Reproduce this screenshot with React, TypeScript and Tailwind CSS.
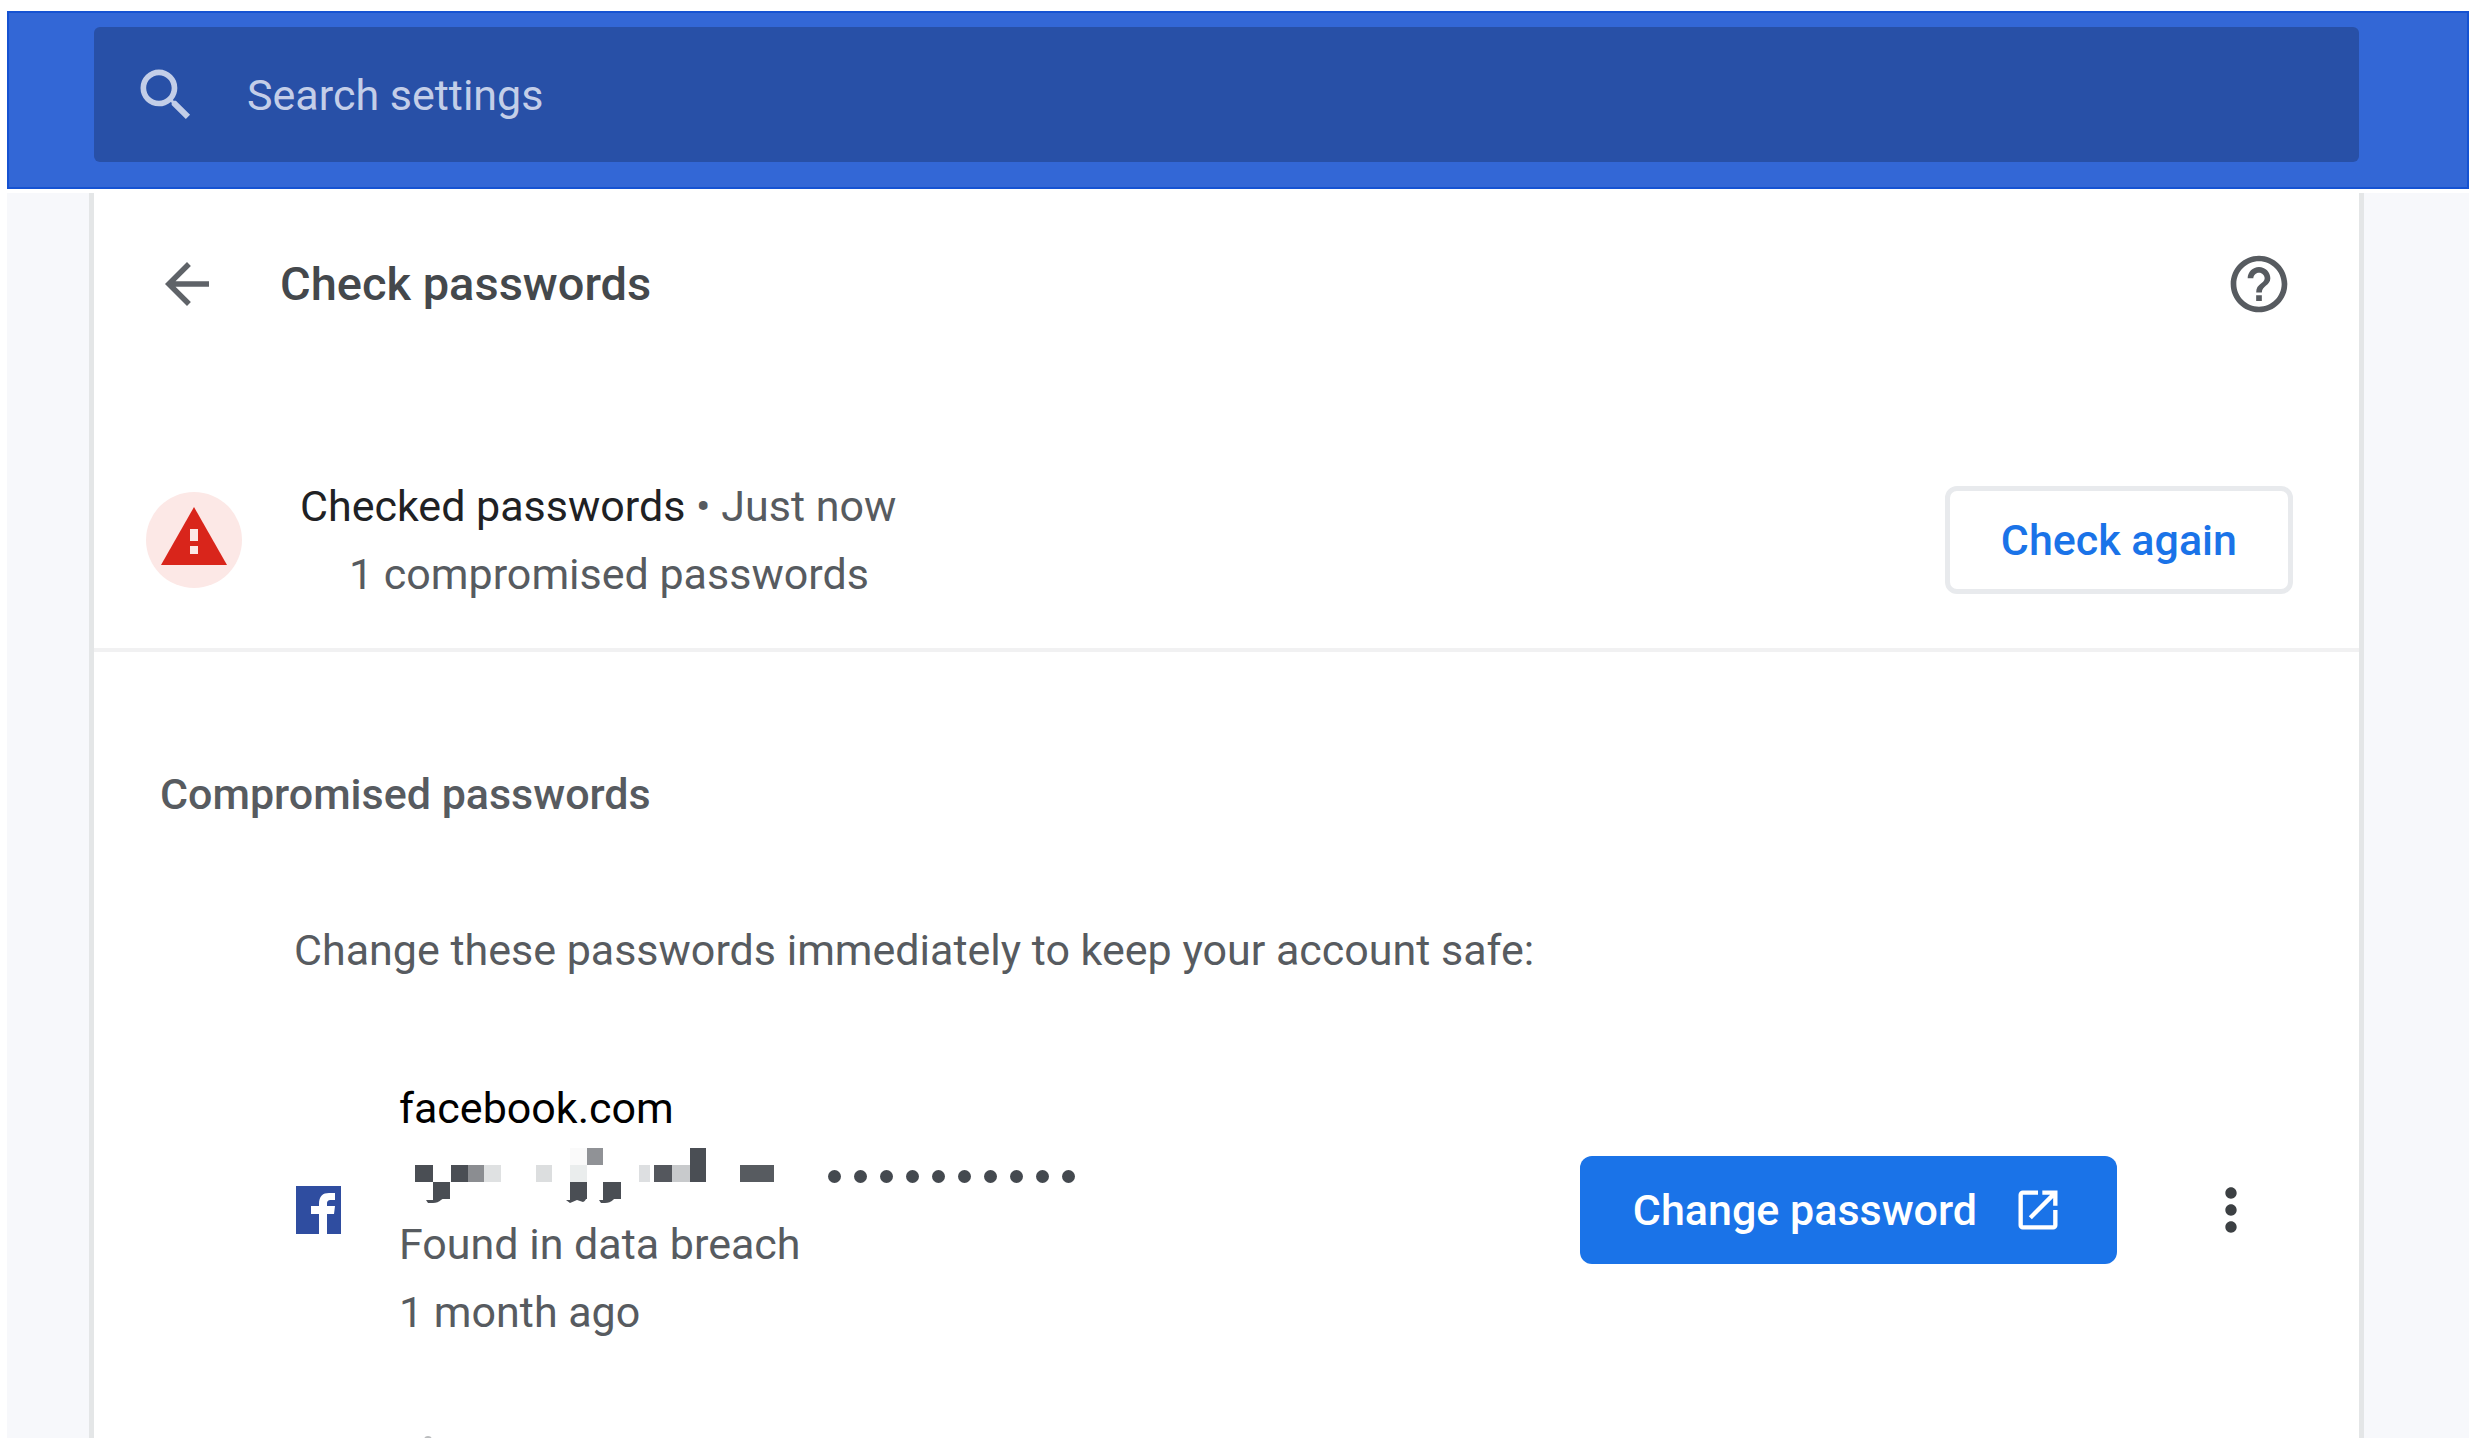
import { useState } from "react";
import { MdArrowBack, MdHelpOutline, MdMoreVert, MdOpenInNew, MdSearch } from "react-icons/md";

interface Cell {
  x: number;
  y: number;
  w: number;
  fill: string;
}

interface Account {
  site: string;
  dots: number;
  reason: string;
  age: string;
}

const accounts: Account[] = [
  { site: "facebook.com", dots: 10, reason: "Found in data breach", age: "1 month ago" },
];

// censored user name, drawn on a grid of 17px cells
const cells: Cell[] = [
  { x: 155, y: 0, w: 17, fill: "#fafafa" },
  { x: 172, y: 0, w: 16, fill: "#909296" },
  { x: 275, y: 0, w: 16, fill: "#4a4e54" },
  { x: 0, y: 17, w: 18, fill: "#4a4e54" },
  { x: 36, y: 17, w: 17, fill: "#4a4e54" },
  { x: 53, y: 17, w: 16, fill: "#8b8d91" },
  { x: 69, y: 17, w: 17, fill: "#dfe1e2" },
  { x: 121, y: 17, w: 16, fill: "#dcdedf" },
  { x: 155, y: 17, w: 17, fill: "#eaeded" },
  { x: 224, y: 17, w: 11, fill: "#dddfe1" },
  { x: 239, y: 17, w: 18, fill: "#54575d" },
  { x: 257, y: 17, w: 18, fill: "#c8cacc" },
  { x: 275, y: 17, w: 16, fill: "#4a4e54" },
  { x: 325, y: 17, w: 34, fill: "#575b60" },
  { x: 18, y: 34, w: 17, fill: "#4a4e54" },
  { x: 155, y: 34, w: 17, fill: "#4a4e54" },
  { x: 188, y: 34, w: 18, fill: "#4a4e54" },
];

function MaskedUsername() {
  return (
    <svg width="360" height="56" viewBox="0 0 360 56" role="img" aria-label="Hidden username">
      {cells.map((c) => (
        <rect key={`${c.x}-${c.y}`} x={c.x} y={c.y} width={c.w} height="17" fill={c.fill} />
      ))}
      <g fill="#4a4e54">
        <path d="M18 48h14l-6 4q-3 3-8 3h-5l-2-3h7z" />
        <path d="M155 48h17q-1 5-4 6l-6-2-7 3-4-3h4z" />
        <path d="M188 48h14l-4 4q-3 3-8 3h-4l-2-3h4z" />
      </g>
    </svg>
  );
}

function WarningIcon() {
  return (
    <svg width="66" height="58" viewBox="0 0 66 58" aria-hidden="true">
      <path d="M33 0 66 58H0z" fill="#d9251b" />
      <path d="M29 22h8v12h-8zM29 39h8v8h-8z" fill="#fce8e6" />
    </svg>
  );
}

function FacebookIcon() {
  return (
    <svg width="45" height="48" viewBox="0 0 45 48" aria-hidden="true" className="shrink-0">
      <rect width="45" height="48" fill="#2f4da0" />
      <path
        fill="#fff"
        d="M23 48V28h-8v-8h8v-2c0-8 4-11 10-11h6v7h-4c-3 0-4 1-4 4v2h8l-1 8h-7v20z"
      />
    </svg>
  );
}

function AccountRow({ account }: { account: Account }) {
  return (
    <li className="flex items-center pl-0.5">
      <FacebookIcon />
      <div className="ml-[58px] flex-1">
        <p className="text-black">{account.site}</p>
        <div className="flex h-[68px] items-center">
          <div className="ml-4">
            <MaskedUsername />
          </div>
          <div className="ml-[53px] flex gap-[13px]" role="img" aria-label="Hidden password">
            {Array.from({ length: account.dots }, (_, i) => (
              <span key={i} className="size-[13px] rounded-full bg-[#44494f]" />
            ))}
          </div>
        </div>
        <p>{account.reason}</p>
        <p>{account.age}</p>
      </div>
      <button
        type="button"
        className="flex h-[108px] items-center gap-[35px] rounded-xl bg-[#1a73e8] px-[53px] font-medium text-white"
      >
        Change password
        <MdOpenInNew className="size-[52px]" />
      </button>
      <button type="button" aria-label="More actions" className="ml-20 text-[#3c4043]">
        <MdMoreVert className="size-[68px]" />
      </button>
    </li>
  );
}

export default function App() {
  const [query, setQuery] = useState("");

  return (
    <div className="flex h-screen flex-col overflow-hidden bg-white pt-[11px] pr-[14px] pl-[7px] font-[Roboto,sans-serif] text-[43px] leading-[68px] text-[#575b60]">
      <header className="border-2 border-[#1552d2] bg-[#3367d6] pt-[14px] pr-[108px] pb-[25px] pl-[85px]">
        <label className="flex h-[135px] items-center gap-[47px] rounded-md bg-[#2850a7] pl-[38px] text-[#c3cee8]">
          <MdSearch className="size-[68px] shrink-0" />
          <input
            type="text"
            aria-label="Search settings"
            placeholder="Search settings"
            value={query}
            onChange={(e) => setQuery(e.target.value)}
            className="min-w-0 flex-1 bg-transparent outline-none placeholder:text-[#c3cee8]"
          />
        </label>
      </header>

      <div className="min-h-0 flex-1 border-t-4 border-white bg-[#f7f8fb] pr-[105px] pl-[82px]">
        <main className="h-full overflow-hidden border-x-[5px] border-[#e4e6e7] bg-white">
          <div className="flex items-center pt-[57px] pr-[66px] pl-[60px]">
            <button type="button" aria-label="Back">
              <MdArrowBack className="size-[66px] text-[#5f6368]" />
            </button>
            <h1 className="ml-[60px] flex-1 text-[47px] font-medium text-[#44484c]">Check passwords</h1>
            <button type="button" aria-label="Help">
              <MdHelpOutline className="size-[68px]" />
            </button>
          </div>

          <section className="mt-[154px] flex items-center border-b-4 border-[#f1f1f2] pr-[66px] pb-[40px] pl-[52px]">
            <div className="flex size-24 items-center justify-center rounded-full bg-[#fce8e6] pb-2">
              <WarningIcon />
            </div>
            <div className="ml-[58px] flex-1">
              <p>
                <span className="text-[#202124]">Checked passwords</span> • Just now
              </p>
              <p className="pl-[49px]">1 compromised passwords</p>
            </div>
            <button
              type="button"
              className="h-[108px] rounded-xl border-[5px] border-[#e8eaed] px-[51px] font-medium text-[#1a73e8]"
            >
              Check again
            </button>
          </section>

          <section className="pr-[94px] pl-[66px]">
            <h2 className="pt-[108px] font-medium">Compromised passwords</h2>
            <div className="pl-[134px]">
              <p className="pt-[88px]">Change these passwords immediately to keep your account safe:</p>
              <ul className="pt-[90px]">
                {accounts.map((a) => (
                  <AccountRow key={a.site} account={a} />
                ))}
                {/* next entry, cut off by the window */}
                <li className="pt-[90px] pl-[130px]" aria-hidden="true">
                  <span className="block size-2 rounded-full bg-[#b9bbbd]" />
                </li>
              </ul>
            </div>
          </section>
        </main>
      </div>
    </div>
  );
}
